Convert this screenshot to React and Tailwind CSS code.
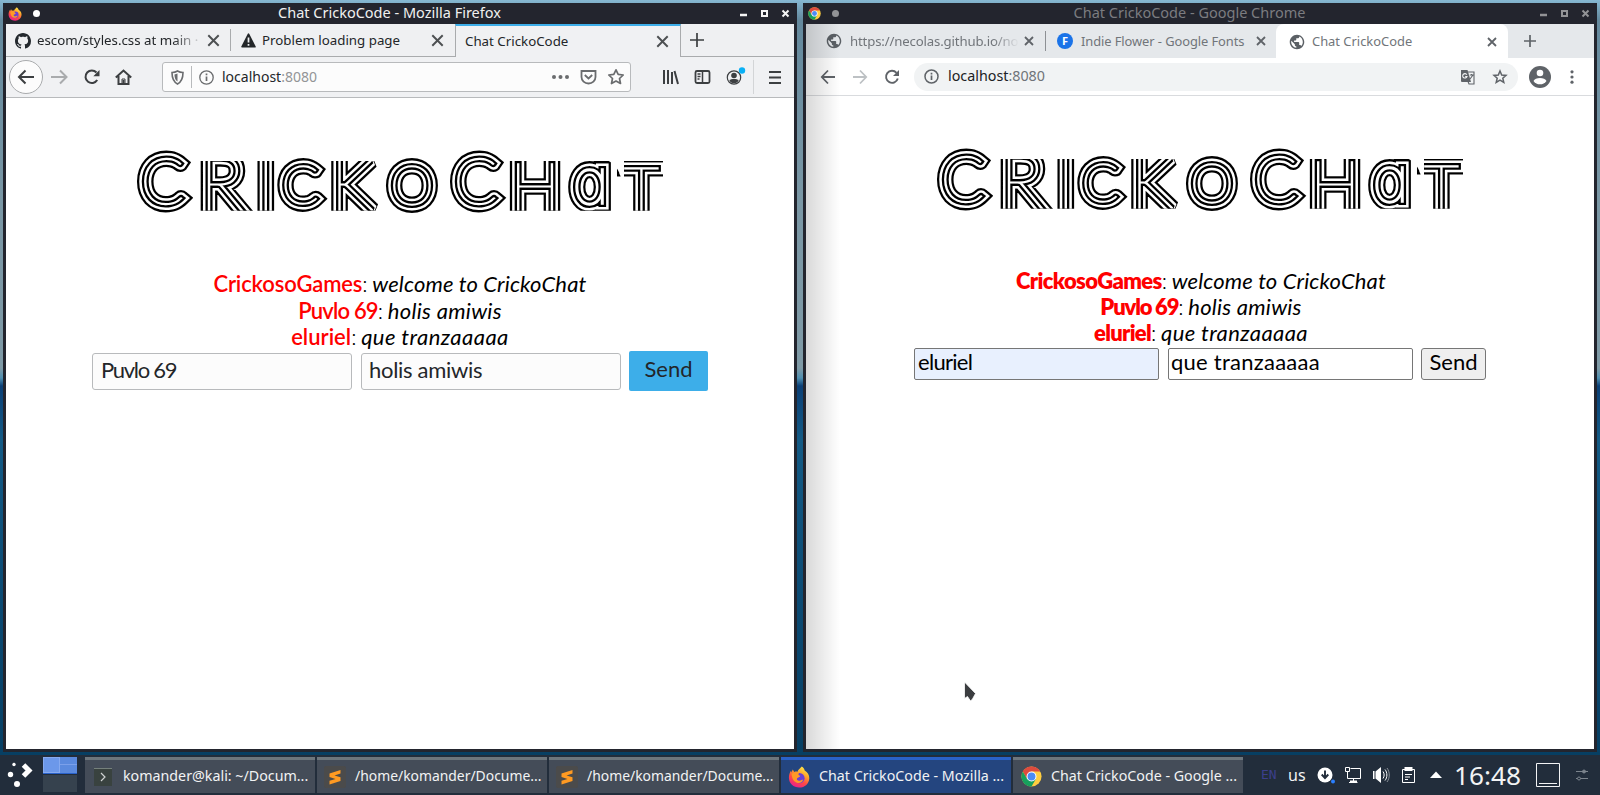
import React from "react";

const noto = "font-['Noto_Sans',sans-serif]";

function FirefoxLogo({ size }) {
  return (
    <svg width={size} height={size} viewBox="0 0 24 24" className="shrink-0">
      <defs>
        <linearGradient id="ffA" x1="0.8" y1="0" x2="0.3" y2="1">
          <stop offset="0" stopColor="#fff44f" />
          <stop offset="0.35" stopColor="#ffa52a" />
          <stop offset="0.65" stopColor="#ff4a45" />
          <stop offset="1" stopColor="#e81f8e" />
        </linearGradient>
      </defs>
      <path fill="url(#ffA)" d="M15 0.5c1.8 1.2 2.8 2.6 3.2 4.3 3.2 1.8 5 4.6 5 8.2C23.200 19 18.400 23.500 12.200 23.500S1 19 1 12.800C1 9.500 2 7 3.300 5.200L3.700 7 5.200 3.800 6.800 6.500c1.400-.5 2.400-.5 3.600-.2C11 3.800 12.800 3.200 15 .5z" />
      <circle cx="12.500" cy="13.300" r="5.600" fill="#6a3fd6" />
      <path fill="#ff9a26" d="M4 8.500c2.500-2 5.500-2.400 8-.3-1.200 1.200-.4 2.200 1.500 2.300-.7 1.800-2.700 1.700-3.600 2.800-1 1.400 1 3 2.600 2.700 2-.3 2.400-1.300 4-1-1 2.600-3.200 4-6 3.500C6.500 17.800 4 13.500 4 8.500z" />
    </svg>
  );
}

function ChromeLogo({ size }) {
  return (
    <svg width={size} height={size} viewBox="0 0 24 24" className="shrink-0">
      <circle cx="12" cy="12" r="11.500" fill="#ffcd40" />
      <path fill="#dd4b3e" d="M2.040 6.250A11.500 11.500 0 0 1 21.960 6.250L12 6.250 7 14.900z" />
      <path fill="#17a05d" d="M2.040 6.250A11.500 11.500 0 0 0 12 23.500L17 14.900 7 14.900z" />
      <circle cx="12" cy="12" r="5.700" fill="#fff" />
      <circle cx="12" cy="12" r="4.500" fill="#4c8bf5" />
    </svg>
  );
}

function Globe() {
  return (
    <svg width="16" height="16" viewBox="1 1 22 22" className="-mr-px shrink-0">
      <path fill="#5b6065" d="M12 2C6.480 2 2 6.480 2 12s4.480 10 10 10 10-4.480 10-10S17.520 2 12 2zm-1 17.930c-3.950-.490-7-3.850-7-7.930 0-.620.080-1.210.210-1.790L9 15v1c0 1.100.9 2 2 2v1.930zm6.900-2.540c-.260-.810-1-1.390-1.900-1.390h-1v-3c0-.550-.450-1-1-1H8v-2h2c.550 0 1-.450 1-1V7h2c1.100 0 2-.9 2-2v-.410c2.930 1.190 5 4.060 5 7.410 0 2.080-.8 3.970-2.100 5.390z" />
    </svg>
  );
}

function Cross({ size, color, w }) {
  return (
    <svg width={size} height={size} viewBox="0 0 10 10" className="shrink-0">
      <path d="M1 1l8 8M9 1l-8 8" stroke={color} strokeWidth={w} fill="none" />
    </svg>
  );
}

function TitleBar({ title, logo, color, dot, textClass }) {
  return (
    <div className="flex h-[21px] items-center bg-[#23252e] pl-[5px] pr-[7px]">
      {logo}
      <span className={"ml-[11px] h-[7px] w-[7px] rounded-full " + dot} />
      <div className={"-mt-[4px] flex-1 text-center text-[14.500px] leading-[20px] " + textClass}>{title}</div>
      <svg width="50" height="21" viewBox="0 0 50 21" fill="none" stroke={color} className="shrink-0">
        <path d="M0 12h7" strokeWidth="2.500" />
        <path d="M22 8h5v5h-5z" strokeWidth="2" />
        <path d="M42.500 7.500l6 6M48.500 7.500l-6 6" strokeWidth="2" />
      </svg>
    </div>
  );
}

const letters = [
  { t: "C", x: 4.5, y: 54, s: "64px" },
  { t: "r", small: true, x: 64, y: 60, s: "74px" },
  { t: "i", small: true, x: 121, y: 60, s: "72px" },
  { t: "c", small: true, x: 145.5, y: 54.3, s: "54px" },
  { t: "k", small: true, x: 195, y: 60, s: "70px" },
  { t: "o", small: true, x: 254, y: 55, s: "56px" },
  { t: "C", x: 317.5, y: 54, s: "64px" },
  { t: "h", small: true, x: 374, y: 60, s: "67px" },
  { t: "a", x: 436, y: 54, s: "64px", inter: true },
  { t: "t", small: true, x: 488, y: 62, s: "61px" },
];

const layers = [
  ["#000", 15.8],
  ["#fff", 11.2],
  ["#000", 6.2],
  ["#fff", 1.5],
];

function Heading({ id }) {
  return (
    <h1 className="flex justify-center">
      <svg width="528" height="66" viewBox="0 0 528 66" className="overflow-visible font-[Lato] font-thin">
        <defs>
          <clipPath id={id + "-clip"}>
            <path d="M0 0H57V66H0zM61 11H117.500V60.700H61zM119 11H139V60.700H119zM139 0H193V66H139zM194 11H247V60.700H194zM248 0H371V66H248zM371 11H427V60.700H371zM428 8H466Q484 14 485.500 32V60.700H428zM488 11H527V60.700H488z" />
          </clipPath>
          <text id={id} strokeLinejoin="miter" strokeMiterlimit="2.500">
            {letters.map((l, i) => (
              <tspan
                key={i}
                x={l.x}
                y={l.y}
                fontSize={l.s}
                className={l.inter ? "font-[Inter] [font-feature-settings:'cv11']" : l.small ? "uppercase" : ""}
              >
                {l.t}
              </tspan>
            ))}
          </text>
        </defs>
        <g clipPath={"url(#" + id + "-clip)"}>
          {layers.map(([c, w], i) => (
            <use key={i} href={"#" + id} stroke={c} fill={c} strokeWidth={w} />
          ))}
        </g>
      </svg>
    </h1>
  );
}

function Line({ name, text, box, nameClass, textClass }) {
  return (
    <p className={"flex whitespace-nowrap " + box}>
      <b className={"text-[#f00] " + nameClass}>{name}</b>
      <span className="mr-[6px] w-[4px] font-light">:</span>
      <i className={"font-normal " + textClass}>{text}</i>
    </p>
  );
}

function Firefox() {
  return (
    <section className="flex h-[749px] w-[794px] flex-col rounded-t-[5px] bg-[#23252e]">
      <TitleBar
        title="Chat CrickoCode - Mozilla Firefox"
        logo={<FirefoxLogo size={14} />}
        color="#f4f4f4"
        dot="bg-white"
        textClass="text-[#f0f0f0] pr-px"
      />
      <div className="mx-[3px] mb-[3px] flex flex-1 flex-col bg-white">
        <div className="flex h-[33px] border-b border-[#a9abad] bg-[#eff0f2] text-[13.300px] text-[#232629]">
          <div className="flex w-[224px] items-center pl-[9px] pr-[10px] pt-px">
            <svg width="16" height="16" viewBox="0 0 16 16" fill="#24292e" className="shrink-0">
              <path d="M8 0C3.580 0 0 3.580 0 8c0 3.540 2.290 6.530 5.470 7.590.4.070.55-.17.55-.38 0-.19-.01-.82-.01-1.490-2.010.37-2.530-.49-2.690-.94-.09-.23-.48-.94-.82-1.130-.28-.15-.68-.52-.01-.53.63-.01 1.080.58 1.230.82.72 1.210 1.870.87 2.330.66.07-.52.28-.87.51-1.070-1.780-.2-3.640-.89-3.640-3.950 0-.87.31-1.590.82-2.150-.08-.2-.36-1.020.08-2.120 0 0 .67-.21 2.200.82.64-.18 1.320-.27 2-.27s1.360.09 2 .27c1.530-1.040 2.200-.82 2.200-.82.44 1.100.16 1.920.08 2.120.51.56.82 1.270.82 2.150 0 3.070-1.870 3.750-3.650 3.950.29.25.54.73.54 1.480 0 1.070-.01 1.930-.01 2.200 0 .21.15.46.55.38A8.010 8.010 0 0 0 16 8c0-4.420-3.580-8-8-8z" />
            </svg>
            <span className="ml-[6px] w-[166px] overflow-hidden whitespace-nowrap [mask-image:linear-gradient(to_right,#000_82%,transparent)]">escom/styles.css at main ·</span>
            <span className="ml-auto flex"><Cross size={13} color="#4d5052" w={1.5} /></span>
          </div>
          <div className="my-[5px] w-px bg-[#a9abad]" />
          <div className="flex w-[224px] items-center pl-[10px] pr-[11px] pt-px">
            <svg width="15" height="15" viewBox="0 0 15 15" className="shrink-0">
              <path d="M7.500 1.200L14 13.800H1z" fill="#232629" stroke="#232629" strokeWidth="1.600" strokeLinejoin="round" />
              <path d="M7.500 4.500v5M7.500 11v1.800" stroke="#eff0f2" strokeWidth="1.700" />
            </svg>
            <span className="ml-[6px] whitespace-nowrap">Problem loading page</span>
            <span className="ml-auto flex"><Cross size={13} color="#4d5052" w={1.5} /></span>
          </div>
          <div className="-mb-px flex w-[226px] items-center border-x border-t-2 border-x-[#a9abad] border-t-[#3daee9] bg-[#f0f1f3] pl-[9px] pr-[11px]">
            <span className="whitespace-nowrap">Chat CrickoCode</span>
            <span className="ml-auto flex"><Cross size={13} color="#4d5052" w={1.5} /></span>
          </div>
          <svg width="32" height="32" viewBox="0 0 32 32" stroke="#3c3f41" strokeWidth="1.700" fill="none">
            <path d="M16 9v14M9 16h14" />
          </svg>
        </div>
        <div className="flex h-[41px] items-center border-b border-[#b8babc] bg-[#f0f1f3] pl-[3px]">
          <span className="flex h-[34px] w-[34px] shrink-0 items-center justify-center rounded-full border border-[#a9abad] bg-[#fcfcfc]">
            <svg width="18" height="16" viewBox="0 0 18 16" fill="none" stroke="#3c3f41" strokeWidth="2"><path d="M17 8H2M8.500 1.500L2 8l6.500 6.500" /></svg>
          </span>
          <svg width="18" height="16" viewBox="0 0 18 16" fill="none" stroke="#a9abad" strokeWidth="2" className="ml-[8px] shrink-0"><path d="M0 8h15M9 1.500L15.500 8 9 14.500" /></svg>
          <svg width="16" height="16" viewBox="0 0 16 16" fill="none" stroke="#3c3f41" strokeWidth="2" className="ml-[15px] shrink-0"><path d="M13.200 11A6.300 6.300 0 1 1 12.500 3.500" /><path d="M15.500 1v6.200H9.300z" fill="#3c3f41" stroke="none" /></svg>
          <svg width="17" height="16" viewBox="0 0 17 16" fill="none" stroke="#3c3f41" strokeWidth="2" className="ml-[15px] shrink-0"><path d="M.8 8.500l7.700-7 7.700 7M3.500 7v8h10V7M8.500 15v-4" /><path d="M7 10h3v5H7z" strokeWidth="1" /></svg>
          <div className="ml-[30px] flex h-[30px] w-[469px] shrink-0 items-center rounded-[3px] border border-[#b8babc] bg-[#fcfcfc] pl-[8px] pr-[6px] text-[14.300px]">
            <svg width="13" height="15" viewBox="0 0 13 15" fill="none" stroke="#6a6c6e"><path strokeWidth="1.600" d="M1 2.500c2 0 3.500-.3 5.500-1.500C8.500 2.200 10 2.500 12 2.500c0 5-.8 9-5.500 11.500C1.800 11.500 1 7.500 1 2.500z" /><path d="M6.500 3.500v8C4 10 3.500 7 3.500 4.500z" fill="#6a6c6e" stroke="none" /></svg>
            <div className="ml-[7px] h-[22px] w-px bg-[#b8babc]" />
            <svg width="15" height="15" viewBox="0 0 15 15" fill="none" stroke="#6a6c6e" className="ml-[7px]"><circle cx="7.500" cy="7.500" r="6.700" strokeWidth="1.300" /><path d="M7.500 6.500V11M7.500 3.500v1.800" strokeWidth="1.700" /></svg>
            <span className="-mt-px ml-[8px] text-[14px] text-[#232629]">localhost<span className="text-[#939597]">:8080</span></span>
            <svg width="72" height="18" viewBox="0 0 72 18" fill="none" stroke="#6a6c6e" className="ml-auto">
              <g fill="#6a6c6e" stroke="none"><circle cx="2" cy="9" r="2" /><circle cx="8.500" cy="9" r="2" /><circle cx="15" cy="9" r="2" /></g>
              <path strokeWidth="1.800" d="M29.500 3h14v6a7 6.500 0 0 1-14 0z" /><path strokeWidth="1.800" d="M32.800 7l3.700 3.500L40.200 7" />
              <path strokeWidth="1.700" strokeLinejoin="round" d="M64 1.800l2.200 4.600 5 .6-3.700 3.500 1 5L64 13l-4.500 2.500 1-5L56.800 7l5-.6z" />
            </svg>
          </div>
          <svg width="126" height="36" viewBox="0 0 126 36" fill="none" stroke="#3c3f41" className="ml-[32px] shrink-0">
            <path strokeWidth="2" d="M1 11v14M5 11v14M9 13v12M11.500 12l3.500 13" strokeLinecap="butt" />
            <rect x="32.500" y="12" width="14" height="12" rx="1.500" strokeWidth="1.800" /><path strokeWidth="1.500" d="M39.500 12v12M34.500 15h3M34.500 17.500h3M34.500 20h2" />
            <circle cx="71" cy="18.500" r="6.700" strokeWidth="1.200" /><circle cx="71" cy="16.500" r="2.800" fill="#3c3f41" stroke="none" /><path d="M66.300 21a5 5 0 0 0 9.400 0c-2-1.500-7.400-1.500-9.400 0z" fill="#3c3f41" stroke="none" />
            <circle cx="79" cy="11.500" r="3.200" fill="#0ab0f5" stroke="none" />
            <path d="M90.500 1v34" stroke="#d3d5d7" />
            <path d="M106 13h12M106 18.500h12M106 24h12" strokeWidth="2" />
          </svg>
        </div>
        <div className="flex flex-1 flex-col items-center pt-[52px] font-[Lato] text-[22px]">
          <Heading id="title-a" />
          <div className="mt-[55px] flex h-[80px] flex-col items-center text-black">
            <Line box="h-[26.500px] leading-[26.500px]" name="CrickosoGames" text="welcome to CrickoChat" nameClass="font-semibold tracking-[-0.150px]" textClass="tracking-[0.150px]" />
            <Line box="h-[26.500px] leading-[26.500px]" name="Puvlo 69" text="holis amiwis" nameClass="font-semibold tracking-[-0.800px]" textClass="tracking-[0.300px]" />
            <Line box="h-[26.500px] leading-[26.500px]" name="eluriel" text="que tranzaaaaa" nameClass="font-semibold" textClass="tracking-[0.450px]" />
          </div>
          <div className="flex items-center text-[#232629]">
            <div className="h-[37px] w-[260px] rounded-[3px] border border-[#b8babc] bg-[#fcfcfc] px-[8px] leading-[32px] tracking-[-1.300px]">Puvlo 69</div>
            <div className="ml-[9px] h-[37px] w-[260px] rounded-[3px] border border-[#b8babc] bg-[#fcfcfc] px-[7px] leading-[32px] tracking-[-0.300px]">holis amiwis</div>
            <div className="ml-[8px] h-[40px] w-[79px] rounded-[2px] bg-[#3daee9] text-center leading-[35px]">Send</div>
          </div>
        </div>
      </div>
    </section>
  );
}

function Chrome() {
  return (
    <section className="flex h-[749px] w-[794px] flex-col rounded-t-[5px] bg-[#23252e]">
      <TitleBar
        title="Chat CrickoCode - Google Chrome"
        logo={<ChromeLogo size={13} />}
        color="#929396"
        dot="bg-[#929396]"
        textClass="text-[#7b7c80]"
      />
      <div className="relative mx-[3px] mb-[3px] flex flex-1 flex-col bg-white">
        <div className="flex h-[34px] items-center bg-[#e5e8eb] text-[12.900px] text-[#71757a]">
          <div className="flex w-[239px] items-center pl-[20px] pr-[11px] pt-px">
            <Globe />
            <span className="ml-[9px] w-[169px] overflow-hidden whitespace-nowrap text-[13.200px] tracking-[-0.150px] [mask-image:linear-gradient(to_right,#000_85%,transparent)]">https://necolas.github.io/no</span>
            <span className="ml-auto flex"><Cross size={10} color="#5f6368" w={1.8} /></span>
          </div>
          <div className="h-[20px] w-px bg-[#8d9094]" />
          <div className="flex w-[230px] items-center pl-[11px] pr-[10px] pt-px">
            <span className="flex h-4 w-4 shrink-0 items-center justify-center rounded-full bg-[#1a73e8] text-[11px] font-bold text-white">F</span>
            <span className="ml-[8px] whitespace-nowrap tracking-[-0.080px]">Indie Flower - Google Fonts</span>
            <span className="ml-auto flex"><Cross size={10} color="#5f6368" w={1.8} /></span>
          </div>
          <div className="flex h-[34px] w-[232px] items-center rounded-t-[8px] bg-white pl-[13px] pr-[11px] pt-px">
            <Globe />
            <span className="ml-[8px] whitespace-nowrap">Chat CrickoCode</span>
            <span className="ml-auto flex"><Cross size={10} color="#5f6368" w={1.8} /></span>
          </div>
          <svg width="34" height="34" viewBox="0 0 34 34" stroke="#5f6368" strokeWidth="1.700" fill="none" className="ml-[4px]"><path d="M18 11v12M12 17h12" /></svg>
        </div>
        <div className="flex h-[38px] items-center border-b border-[#d9dbde] pl-[14px]">
          <svg width="16" height="16" viewBox="0 0 16 16" fill="none" stroke="#5f6368" strokeWidth="1.800"><path d="M15 8H2M8 1.500L1.800 8 8 14.500" /></svg>
          <svg width="16" height="16" viewBox="0 0 16 16" fill="none" stroke="#bdc1c4" strokeWidth="1.800" className="ml-[16px]"><path d="M1 8h13M8 1.500L14.200 8 8 14.500" /></svg>
          <svg width="16" height="16" viewBox="0 0 16 16" fill="none" stroke="#5f6368" strokeWidth="1.900" className="ml-[16px]"><path d="M13.800 9.500A6 6 0 1 1 12.500 3.800" /><path d="M15 1v6H9z" fill="#5f6368" stroke="none" /></svg>
          <div className="ml-[14px] flex h-[28px] w-[604px] items-center rounded-full bg-[#f1f3f4] pl-[10px] pr-[10px] text-[14.300px]">
            <svg width="15" height="15" viewBox="0 0 15 15" fill="none" stroke="#5f6368"><circle cx="7.500" cy="7.500" r="6.500" strokeWidth="1.500" /><path d="M7.500 6.500V11M7.500 3.700v1.700" strokeWidth="1.700" /></svg>
            <span className="-mt-px ml-[9px] text-[#202124]">localhost<span className="text-[#6f7378]">:8080</span></span>
            <svg width="48" height="16" viewBox="0 0 48 16" fill="none" stroke="#5f6368" className="ml-auto">
              <path d="M1 1h6.500l3.500 12H2a1 1 0 0 1-1-1z" fill="#5f6368" stroke="none" /><path d="M8 3h6v12H9l-1-2.500M9.800 6h3.700M11.600 5v1M10 10l3-4" strokeWidth="1.100" /><path d="M6.800 5.700A2.200 2.200 0 1 0 7 7.500H5.200" stroke="#f1f3f4" strokeWidth="1.100" />
              <path strokeWidth="1.500" d="M40 2l1.700 4 4.300.4-3.200 2.800 1 4.200L40 11.200l-3.800 2.200 1-4.200L34 6.400l4.300-.4z" />
            </svg>
          </div>
          <svg width="22" height="22" viewBox="0 0 22 22" className="ml-[11px]"><circle cx="11" cy="11" r="11" fill="#5f6368" /><circle cx="11" cy="7" r="3.300" fill="#fff" /><path d="M4.500 15c1.500-4 11.500-4 13 0a8 8 0 0 1-13 0z" fill="#fff" /></svg>
          <svg width="4" height="14" viewBox="0 0 4 14" fill="#5f6368" className="ml-[19px]"><circle cx="2" cy="1.800" r="1.600" /><circle cx="2" cy="7" r="1.600" /><circle cx="2" cy="12.200" r="1.600" /></svg>
        </div>
        <div className="flex flex-1 flex-col items-center pt-[52px] font-[Lato] text-[22px]">
          <Heading id="title-b" />
          <div className="mt-[54px] flex h-[80px] flex-col items-center pl-[2px] text-black">
            <Line box="h-[26px] leading-[26px]" name="CrickosoGames" text="welcome to CrickoChat" nameClass="font-extrabold tracking-[-0.650px]" textClass="tracking-[0.150px]" />
            <Line box="h-[26px] leading-[26px]" name="Puvlo 69" text="holis amiwis" nameClass="font-extrabold tracking-[-1.200px]" textClass="tracking-[0.250px]" />
            <Line box="h-[26px] leading-[26px]" name="eluriel" text="que tranzaaaaa" nameClass="font-extrabold tracking-[-0.700px]" textClass="tracking-[0.400px]" />
          </div>
          <div className="flex items-center text-black">
            <div className="h-[32px] w-[245px] rounded-[2px] border border-[#767676] bg-[#e8f0fe] px-[3px] leading-[26px] tracking-[-0.700px]">eluriel</div>
            <div className="ml-[9px] h-[32px] w-[245px] rounded-[2px] border border-[#767676] bg-white px-[2px] leading-[26px] tracking-[0.250px]">que tranzaaaaa</div>
            <div className="ml-[8px] h-[32px] w-[65px] rounded-[3px] border border-[#767676] bg-[#efefef] text-center leading-[26px]">Send</div>
          </div>
        </div>
        <div className="pointer-events-none absolute inset-y-0 left-0 w-[34px] bg-gradient-to-r from-black/15 to-transparent" />
        <svg width="14" height="22" viewBox="0 0 14 22" className="absolute left-[157px] top-[657px]"><path d="M1.500 1v16.500l3-2 3 4.500 2-2 3-5.500z" fill="#3b3d40" stroke="#fff" strokeWidth="0.800" /></svg>
      </div>
    </section>
  );
}

function Sublime() {
  return (
    <svg width="22" height="22" viewBox="0 0 22 22" className="shrink-0">
      <rect width="22" height="22" rx="2" fill="#4b4b4b" />
      <path fill="#ff9a22" d="M5.500 7.500L16.500 4v3.600L10.500 9.500l6 1.800v3.800L5.500 18.500v-3.700l6-1.900-6-1.800z" />
    </svg>
  );
}

function Task({ icon, label, active, pad }) {
  return (
    <div className={"flex h-[36px] w-[230px] items-center whitespace-nowrap border-t-[3px] text-[#f2f3f4] " + pad + (active ? " border-[#2a62c9] bg-[#24457f]" : " border-[#6d767d] bg-[#444c58]")}>
      {icon}
      <span className="-mt-px">{label}</span>
    </div>
  );
}

export default function App() {
  return (
    <div className={"flex h-[795px] w-[1600px] flex-col overflow-hidden bg-[#222d3b] " + noto}>
      <main className="flex h-[755px] justify-between bg-[linear-gradient(to_bottom,#86b8d2_0px,#64899d_20px,#7a97a5_200px,#7f9aa6_368px,#4f8fb0_378px,#0b3f76_386px,#135a85_440px,#0b4a73_600px,#073f63_755px)] p-[3px]">
        <Firefox />
        <Chrome />
      </main>
      <footer className="flex h-[40px] items-start pt-[2px]">
        <svg width="43" height="36" viewBox="0 0 43 36" className="shrink-0">
          <g fill="#fff"><circle cx="14" cy="7.500" r="1.700" /><circle cx="10.500" cy="17.500" r="2.700" /><circle cx="17" cy="27" r="3" /></g>
          <path d="M23.500 8l5.500 5.500-5.500 5.500" fill="none" stroke="#fff" strokeWidth="5" />
        </svg>
        <div className="mr-[8px] w-[34px]">
          <div className="flex h-[17px] border-b border-[#2a62c9] bg-[#5b8ade]">
            <div className="w-[17px] border border-[#86aaf0] bg-[#6c98ea]" />
            <div className="flex-1"><div className="h-[8px] border-b border-[#7ba0ea]" /></div>
          </div>
          <div className="mt-[1px] h-[17px] bg-[#36424e]" />
        </div>
        <div className="flex gap-[2px]">
          <Task pad="pl-[9px] gap-[11px] text-[14.250px]" label="komander@kali: ~/Docum..." icon={
            <svg width="18" height="18" viewBox="0 0 18 18" className="shrink-0"><rect width="18" height="18" fill="#39423f" /><path d="M0 .5h18" stroke="#75807c" /><path d="M7 5l4 4-4 4" fill="none" stroke="#cfd2d2" strokeWidth="1.200" /></svg>
          } />
          <Task pad="pl-[7px] gap-[9px] text-[13.900px]" label="/home/komander/Docume..." icon={<Sublime />} />
          <Task pad="pl-[7px] gap-[9px] text-[13.900px]" label="/home/komander/Docume..." icon={<Sublime />} />
          <Task pad="pl-[7px] gap-[9px] text-[14.250px]" label="Chat CrickoCode - Mozilla ..." active icon={<FirefoxLogo size={22} />} />
          <Task pad="pl-[8px] gap-[9px] text-[14.250px]" label="Chat CrickoCode - Google ..." icon={<ChromeLogo size={21} />} />
        </div>
        <div className="ml-[18px] flex h-[36px] items-center text-[#f2f3f4]">
          <span className="w-[27px] font-['DejaVu_Sans_Mono',monospace] text-[13px] text-[#3c3f8c]">EN</span>
          <span className="w-[29px] text-[16px]">us</span>
          <svg width="126" height="24" viewBox="0 0 126 24" fill="none" stroke="#fff">
            <circle cx="8" cy="12" r="7.500" fill="#fff" stroke="none" /><path d="M8 7.500v7M4.700 11.500l3.300 3.500 3.300-3.500" stroke="#222d3b" strokeWidth="1.900" /><circle cx="16" cy="18.500" r="2" fill="#2a7fff" stroke="none" />
            <path d="M33.500 5.500H43.500V15.500H30.500V10M28.500 4.500h4v4h-4zM30.500 8.500v2M36.500 16v3M32 19.500h8.500" /><path d="M33 18.500h7" strokeWidth="2" />
            <path d="M56 8h1.500v8H56zM58.500 8.500L64 4v16l-5.500-4.500z" fill="#fff" stroke="none" /><path d="M66 8.500c1.500 2 1.500 5 0 7M68 6.500c2.500 3 2.500 8 0 11" /><path d="M70 5c3 4 3 10 0 14" stroke="#8b929a" />
            <path d="M85.500 6.500h12v13h-12z" /><path d="M87.500 4h8v4h-8z" fill="#fff" stroke="none" /><path d="M88 11.500h7M88 14h5M88 16.500h3" />
            <path d="M113 15l6-6.500 6 6.500z" fill="#fff" stroke="none" />
          </svg>
          <span className="ml-[11px] w-[82px] text-[26.200px] leading-[36px]">16:48</span>
          <svg width="54" height="24" viewBox="0 0 54 24" fill="none" stroke="#f2f3f4"><path d="M.5.5h23v23H.5zM3 20.500h18" /><path d="M40 8.500h12M40 15.500h12" stroke="#7c848d" /><circle cx="48" cy="8.500" r="1.500" fill="#7c848d" stroke="#7c848d" /><circle cx="43" cy="15.500" r="1.500" fill="#222d3b" stroke="#7c848d" /></svg>
        </div>
      </footer>
    </div>
  );
}
